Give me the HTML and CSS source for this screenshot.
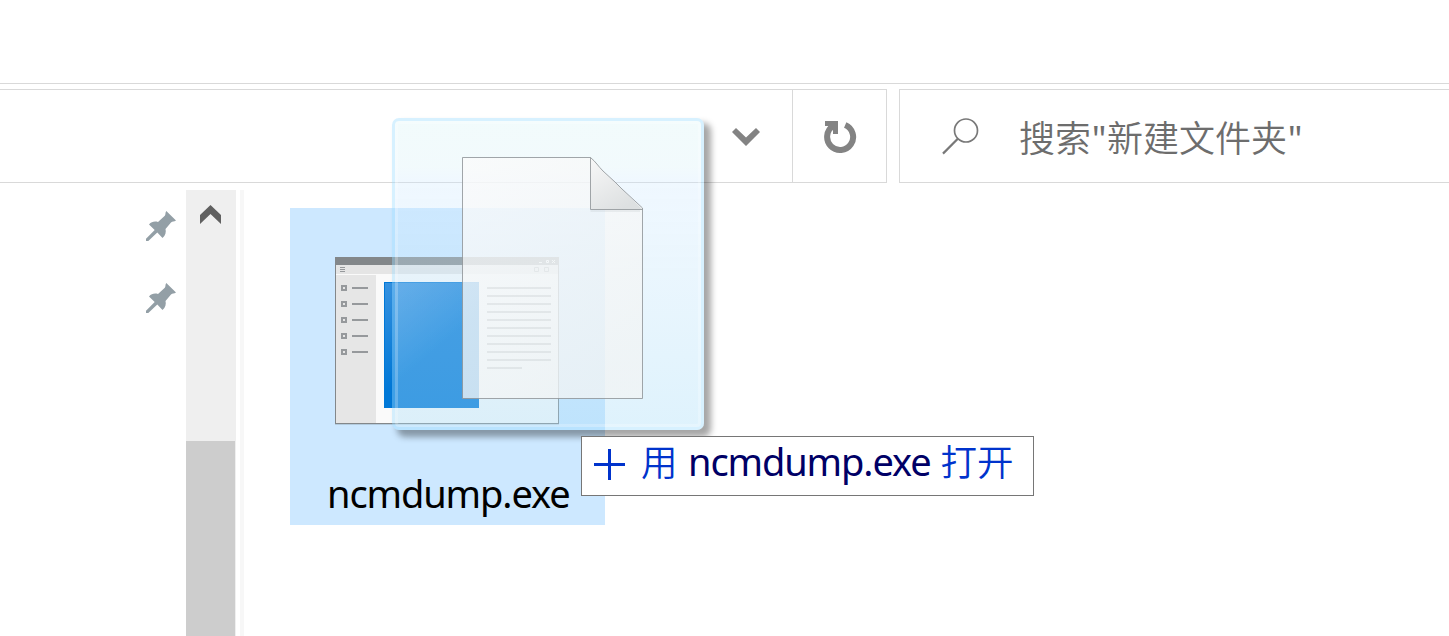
FILE: index.html
```html
<!DOCTYPE html>
<html lang="zh-CN">
<head>
<meta charset="utf-8">
<title>新建文件夹</title>
<link rel="stylesheet" href="styles.css">
</head>
<body>
<div class="explorer">
  <header class="toolbar">
    <div class="address">
      <div class="path"></div>
      <button class="history" aria-label="历史"><svg width="28" height="20" viewBox="0 0 28 20"><path d="M0 5 4 1 14 10.5 24 1 28 5 14 19Z" fill="#838383"/></svg></button>
      <button class="refresh" aria-label="刷新"><svg width="34" height="34" viewBox="0 0 34 34"><path d="M22.2 5A13 13 0 1 1 10 6.1" fill="none" stroke="#838383" stroke-width="6"/><path d="M2 1H15V14H10V8L6 9V6H2Z" fill="#838383"/></svg></button>
    </div>
    <div class="search">
      <svg width="37" height="37" viewBox="0 0 37 37"><g fill="none" stroke="#787878"><circle cx="24" cy="12.5" r="11.5" stroke-width="1.7"/><path d="M15.8 20.8 1 35.6" stroke-width="2.2"/></g></svg>
      <span class="placeholder">搜索<span class="quote">"</span>新建文件夹<span class="quote">"</span></span>
    </div>
  </header>
  <main class="body">
    <nav class="sidebar">
      <svg class="pin" width="30" height="30" viewBox="0 0 30 30"><path d="M20.3 0 30 9.5C28 11 26.500 10 25 11.500L19.500 18C20.300 21 19.500 24.500 16.500 27L11.300 21.500 2.300 30H0V27.800L8.700 19 3 13.400C5.500 10.500 9 10 12 11L18.800 4.800C20 3 19 1.500 20.300 0Z" fill="#939fa6"/></svg>
      <svg class="pin" width="30" height="30" viewBox="0 0 30 30"><path d="M20.3 0 30 9.5C28 11 26.500 10 25 11.500L19.500 18C20.300 21 19.500 24.500 16.500 27L11.300 21.500 2.300 30H0V27.800L8.700 19 3 13.400C5.500 10.500 9 10 12 11L18.800 4.800C20 3 19 1.500 20.300 0Z" fill="#939fa6"/></svg>
    </nav>
    <div class="scrollbar">
      <div class="track"><svg width="21" height="19" viewBox="0 0 21 19"><path d="M0 10 10.5 0 21 10V19L10.5 9 0 19Z" fill="#606060"/></svg></div>
      <div class="thumb"></div>
    </div>
    <div class="splitter"></div>
    <section class="files">
      <div class="file">
        <svg class="app" width="224" height="168" viewBox="0 0 224 168">
          <path d="M0 167.500H224" stroke="#b3cbde"/>
          <rect width="224" height="167" fill="#83878a"/>
          <rect x="1" y="8" width="222" height="158" fill="#fafafa"/>
          <rect x="1" y="8" width="222" height="9" fill="#e5e5e5"/>
          <rect x="1" y="18" width="40" height="148" fill="#e6e6e6"/>
          <path d="M5 10.500h5M5 12.500h5M5 14.500h5" stroke="#96999c"/>
          <path d="M204 5.500h3M220 3l-3 3M217 3l3 3" stroke="#fff" stroke-width=".9"/>
          <path d="M211.500 3.500h2v2h-2z" fill="none" stroke="#fff"/>
          <path d="M199.500 10.500h4v4h-4zM209.500 10.500h4v4h-4z" fill="none" stroke="#96999c"/>
          <g fill="none" stroke="#96999c" stroke-width="2">
            <path d="M7 29h4v4h-4zM7 45h4v4h-4zM7 61h4v4h-4zM7 77h4v4h-4zM7 93h4v4h-4z"/>
            <path d="M17 31h16M17 47h16M17 63h16M17 79h16M17 95h16"/>
            <path d="M152 31h64M152 39h64M152 47h64M152 55h64M152 63h64M152 71h64M152 79h64M152 87h64M152 95h64M152 103h64M152 111h35"/>
          </g>
          <defs><linearGradient id="pane" gradientUnits="userSpaceOnUse" x1="49" y1="25" x2="104" y2="90"><stop offset="0" stop-color="#3792e0"/><stop offset="1" stop-color="#0078d7"/></linearGradient></defs>
          <rect x="49" y="25" width="95" height="126" fill="#0078d7"/>
          <rect x="50" y="26" width="94" height="125" fill="url(#pane)"/>
        </svg>
        <span class="name">ncmdump.exe</span>
      </div>
    </section>
  </main>

  <div class="ghost">
    <svg width="182" height="243" viewBox="0 0 182 243">
      <defs>
        <linearGradient id="paper" x1="0" y1="0" x2=".6" y2="1"><stop offset="0" stop-color="#fbfbfb"/><stop offset="1" stop-color="#f2f4f4"/></linearGradient>
        <linearGradient id="fold" x1="0" y1="0" x2=".6" y2="1"><stop offset="0" stop-color="#f8f8f8"/><stop offset="1" stop-color="#dde0e1"/></linearGradient>
      </defs>
      <path d="M.5.500H128.500C134 5 136 9 141 14L153 25 160 32 180.500 50.500V241.500H.5Z" fill="url(#paper)" fill-opacity=".76"/>
      <path d="M128.500 54H178" stroke="#8c9499" stroke-opacity=".12" stroke-width="2"/>
      <path d="M128.500.500C134 5 136 9 141 14L153 25 160 32 180.500 52.500H128.500Z" fill="url(#fold)"/>
      <path d="M.5.500H128.500C134 5 136 9 141 14L153 25 160 32 180.500 51V241.500H.5ZM128.500.500V52.500H180.500" fill="none" stroke="#8e9396" stroke-opacity=".82"/>
    </svg>
  </div>

  <div class="tip">
    <svg width="31" height="31" viewBox="0 0 31 31"><path d="M15.500 0V31M0 15.500H31" stroke="#0033cc" stroke-width="3"/></svg>
    <span class="verb">用</span><span class="target">ncmdump.exe</span><span class="verb">打开</span>
  </div>
</div>
</body>
</html>
```
FILE: styles.css
```css
* { box-sizing: border-box; }
body { margin: 0; background: #fff; font-family: "Noto Sans", "Noto Sans CJK SC", sans-serif; }
svg { display: block; flex: none; }
.explorer { position: relative; width: 100%; height: 636px; overflow: hidden; padding-top: 83px; display: flex; flex-direction: column; }
.toolbar { flex: none; display: flex; gap: 12px; padding-top: 5px; border-top: 1px solid #d9d9d9; height: 100px; }
.address { display: flex; width: 887px; height: 94px; border: 1px solid #d9d9d9; border-left: 0; }
.path { flex: 1; }
.history, .refresh { display: flex; align-items: center; justify-content: center; margin: 0; padding: 2px 0 0; border: 0; background: none; width: 93px; }
.history { border-right: 1px solid #d9d9d9; }
.search { flex: 1; height: 94px; border: 1px solid #d9d9d9; border-right: 0; display: flex; align-items: center; gap: 40px; padding-left: 42px; }
.placeholder { padding-top: 2px; font-family: "Noto Sans CJK SC", sans-serif; font-weight: 350; font-size: 36px; line-height: 50px; color: #6d6d6d; white-space: nowrap; }
.quote { display: inline-block; width: 16px; text-align: center; font-family: "Noto Sans", sans-serif; font-weight: 400; }
.body { flex: 1; display: flex; padding-top: 7px; }
.sidebar { width: 186px; padding: 21px 10px 0 0; display: flex; flex-direction: column; align-items: flex-end; gap: 42px; }
.scrollbar { width: 50px; background: #efefef; }
.track { height: 251px; padding: 15px 0 0 14px; }
.thumb { width: 49px; height: 195px; background: #cdcdcd; }
.splitter { width: 4px; margin-left: 4px; background: #f7f7f7; }
.files { padding: 18px 0 0 46px; }
.file { width: 315px; height: 317px; background: #cde8ff; display: flex; flex-direction: column; padding-top: 49px; }
.app { margin-left: 45px; }
.name { margin: 42px 0 0 37px; font-size: 38px; line-height: 52px; letter-spacing: -1.1px; color: #000; white-space: nowrap; }
.ghost { position: absolute; left: 392px; top: 118px; width: 312px; height: 312px; border-radius: 7px; padding: 36px 0 0 67px; border: 3px solid rgba(155, 220, 255, .4); background: linear-gradient(rgba(215, 243, 245, .33), rgba(215, 240, 247, .33) 15%, rgba(208, 233, 255, .33) 20%, rgba(197, 230, 251, .36) 50%, rgba(165, 220, 248, .36)) padding-box; box-shadow: inset 0 0 0 3px rgba(255, 255, 255, .22), 6px 6px 6px 1px rgba(0, 0, 0, .35); }
.tip { position: absolute; left: 581px; top: 436px; width: 453px; height: 60px; border: 1px solid #767676; background: #fff; display: flex; align-items: center; padding-left: 12px; white-space: nowrap; }
.tip span { font-size: 38px; line-height: 52px; margin-top: -10px; }
.tip svg { margin-top: -3px; }
.tip .verb { font-family: "Noto Sans CJK SC", sans-serif; font-weight: 350; font-size: 36.5px; color: #0033cc; margin-left: 16px; }
.tip .target { color: #000066; letter-spacing: -1.1px; margin-left: 10.500px; }
.tip .target + .verb { margin-left: 10px; }
```
